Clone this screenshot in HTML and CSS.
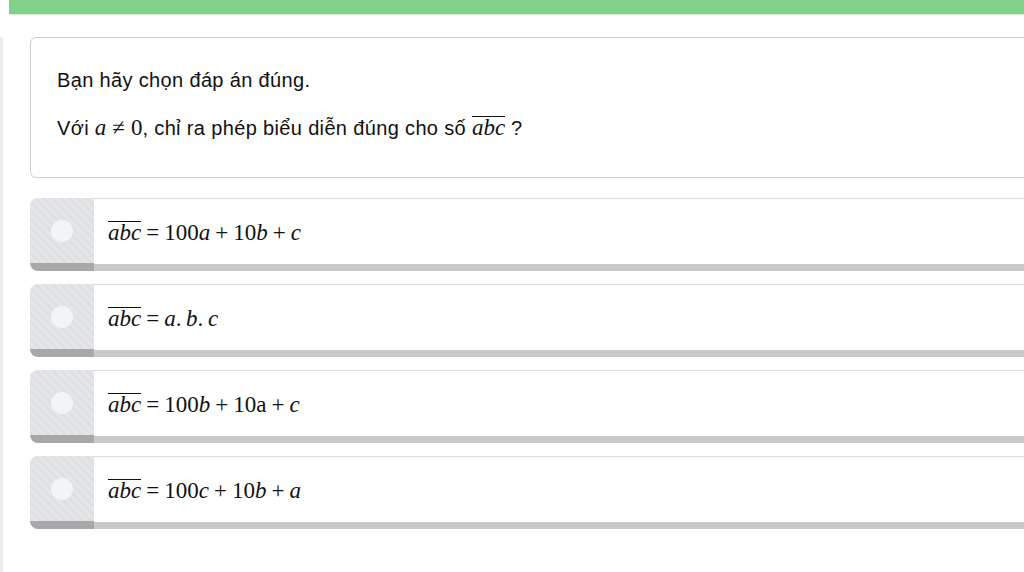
FILE: index.html
```html
<!DOCTYPE html>
<html lang="vi">
<head>
<meta charset="utf-8">
<title>Quiz</title>
<link rel="stylesheet" href="styles.css">
</head>
<body>
<div class="topbar"></div>
<main class="content">
  <section class="question">
    <p class="q-line">Bạn hãy chọn đáp án đúng.</p>
    <p class="q-line">Với <span class="m"><i>a</i><span class="op op-q">≠</span>0</span>, chỉ ra phép biểu diễn đúng cho số <span class="m"><span class="ov"><i>abc</i></span></span> ?</p>
  </section>
  <ul class="options">
    <li class="option">
      <div class="radio-col"><span class="radio"></span></div>
      <div class="opt-body"><span class="m"><span class="ov"><i>abc</i></span><span class="op">=</span>100<i>a</i><span class="op">+</span>10<i>b</i><span class="op">+</span><i>c</i></span></div>
    </li>
    <li class="option">
      <div class="radio-col"><span class="radio"></span></div>
      <div class="opt-body"><span class="m"><span class="ov"><i>abc</i></span><span class="op">=</span><i>a</i>.&thinsp;<i>b</i>.&thinsp;<i>c</i></span></div>
    </li>
    <li class="option">
      <div class="radio-col"><span class="radio"></span></div>
      <div class="opt-body"><span class="m"><span class="ov"><i>abc</i></span><span class="op">=</span>100<i>b</i><span class="op">+</span>10a<span class="op">+</span><i>c</i></span></div>
    </li>
    <li class="option">
      <div class="radio-col"><span class="radio"></span></div>
      <div class="opt-body"><span class="m"><span class="ov"><i>abc</i></span><span class="op">=</span>100<i>c</i><span class="op">+</span>10<i>b</i><span class="op">+</span><i>a</i></span></div>
    </li>
  </ul>
</main>
</body>
</html>
```
FILE: styles.css
```css
html, body {
  margin: 0;
  padding: 0;
  background: #ffffff;
  overflow: hidden;
}
body {
  width: 1024px;
  height: 572px;
  font-family: "Liberation Sans", Arial, sans-serif;
  color: #111;
}
.topbar {
  height: 14px;
  margin-left: 9px;
  background: #7fd189;
  border-bottom: 1px solid #d6f0da;
}
.content {
  border-left: 3px solid #ececec;
  margin-top: 22px;
  padding-left: 27px;
  height: 560px;
  box-sizing: border-box;
}
.question {
  width: 1040px;
  height: 141px;
  box-sizing: border-box;
  border: 1px solid #cfcfcf;
  border-radius: 6px;
  padding: 29px 0 0 26px;
}
.q-line {
  margin: 0 0 20px 0;
  font-size: 20px;
  line-height: 27px;
  letter-spacing: 0.35px;
}
.m {
  font-family: "Liberation Serif", "Times New Roman", serif;
  font-size: 23px;
  letter-spacing: 0;
}
.m i {
  font-style: italic;
}
.op {
  margin: 0 5px;
}
.op-q {
  margin: 0 6px;
}
.ov {
  display: inline-block;
  border-top: 1.3px solid #111;
  line-height: 19px;
  padding-top: 1px;
}
.options {
  list-style: none;
  margin: 20px 0 0 0;
  padding: 0;
}
.option {
  display: flex;
  width: 1040px;
  height: 73px;
  margin-bottom: 13px;
}
.radio-col {
  width: 64px;
  flex: none;
  box-sizing: border-box;
  border-radius: 8px 0 0 8px;
  border-bottom: 8px solid #a8a8a8;
  background: repeating-linear-gradient(45deg, #dee0e3 0 3px, #e4e6e8 3px 6px);
  display: flex;
  align-items: center;
  justify-content: center;
}
.radio {
  width: 22px;
  height: 22px;
  border-radius: 50%;
  background: #f3f4f5;
}
.opt-body {
  flex: 1;
  box-sizing: border-box;
  border-top: 1px solid #dcdcdc;
  border-bottom: 7px solid #c9c9c9;
  display: flex;
  align-items: center;
  padding-left: 14px;
  padding-top: 2px;
  color: #111;
}
```
